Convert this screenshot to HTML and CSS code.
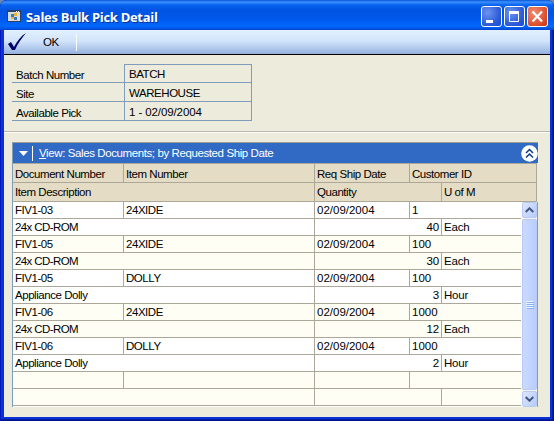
FILE: index.html
```html
<!DOCTYPE html>
<html lang="en">
<head>
<meta charset="utf-8">
<title>Sales Bulk Pick Detail</title>
<link rel="stylesheet" href="styles.css">
</head>
<body>
<main class="window">
  <header class="titlebar">
    <svg class="app-icon" width="14" height="12" viewBox="0 0 14 12" shape-rendering="crispEdges"><path fill="#294263" d="M0 0h14v12H0z"/><path fill="#d6dbe0" d="M1 2h12v9H1z"/><path fill="#f2f4f5" d="M9 1h1v1H9zM11 1h1v1h-1z"/><path fill="#3b78bc" d="M4 4h3v3H4zM7 7h3v3H7z"/><path fill="#e8b52c" d="M7 3h3v3H7zM4 7h3v2H4z"/></svg>
    <h1>Sales Bulk Pick Detail</h1>
    <div class="controls">
      <button class="control" aria-label="Minimize"><svg width="19" height="19"><path fill="#fff" d="M4 13h7v3H4z"/></svg></button>
      <button class="control" aria-label="Maximize"><svg width="19" height="19"><path fill="none" stroke="#fff" d="M4.500 5v9.500h9V5"/><path fill="#fff" d="M4 4h10v3H4z"/></svg></button>
      <button class="control close" aria-label="Close"><svg width="19" height="19"><path fill="none" stroke="#fff" stroke-width="2.200" d="M4.500 4.500l9.500 10M14 4.500l-9.500 10"/></svg></button>
    </div>
  </header>
  <div class="toolbar">
    <svg class="check" width="20" height="18" viewBox="0 0 20 18"><path fill="#00006b" d="M1 11l3-2 3 5C10 8 14 3 19 0c-4 5-8 10-11 17H5z"/></svg>
    <span class="ok">OK</span>
  </div>
  <section class="body">
    <div class="fields">
      <div class="label">Batch Number</div><div class="value batch">BATCH</div>
      <div class="label">Site</div><div class="value">WAREHOUSE</div>
      <div class="label">Available Pick</div><div class="value number">1 - 02/09/2004</div>
    </div>
    <div class="divider"></div>
    <section class="grid">
      <div class="viewbar">
        <svg width="9" height="5" viewBox="0 0 9 5"><path fill="#fff" d="M0 0h9L4.500 5z"/></svg>
        <span class="view"><u>V</u>iew: Sales Documents; by Requested Ship Date</span>
        <svg class="collapse" width="17" height="17" viewBox="0 0 17 17"><circle cx="8.500" cy="8.500" r="8.300" fill="#fff"/><path fill="none" stroke="#123b80" stroke-width="1.500" d="M5 8l3.500-3.500L12 8M5 12.500L8.500 9l3.500 3.500"/></svg>
      </div>
      <div class="heads">
        <div class="row top"><span>Document Number</span><span>Item Number</span><span>Req Ship Date</span><span>Customer ID</span></div>
        <div class="row detail"><span>Item Description</span><span>Quantity</span><span>U of M</span></div>
      </div>
      <div class="data">
        <div class="records">
          <div class="record"><div class="row top"><span>FIV1-03</span><span>24XIDE</span><span>02/09/2004</span><span>1</span></div><div class="row detail"><span class="tight">24x CD-ROM</span><span>40</span><span>Each</span></div></div>
          <div class="record"><div class="row top"><span>FIV1-05</span><span>24XIDE</span><span>02/09/2004</span><span>100</span></div><div class="row detail"><span class="tight">24x CD-ROM</span><span>30</span><span>Each</span></div></div>
          <div class="record"><div class="row top"><span>FIV1-05</span><span>DOLLY</span><span>02/09/2004</span><span>100</span></div><div class="row detail"><span>Appliance Dolly</span><span>3</span><span>Hour</span></div></div>
          <div class="record"><div class="row top"><span>FIV1-06</span><span>24XIDE</span><span>02/09/2004</span><span>1000</span></div><div class="row detail"><span class="tight">24x CD-ROM</span><span>12</span><span>Each</span></div></div>
          <div class="record"><div class="row top"><span>FIV1-06</span><span>DOLLY</span><span>02/09/2004</span><span>1000</span></div><div class="row detail"><span>Appliance Dolly</span><span>2</span><span>Hour</span></div></div>
          <div class="record"><div class="row top"><span></span><span></span><span></span><span></span></div><div class="row detail"><span></span><span></span><span></span></div></div>
        </div>
        <div class="scrollbar">
          <div class="arrow"><svg width="9" height="6"><path fill="none" stroke="#40567e" stroke-width="2" d="M.7 5l3.800-3.700L8.300 5"/></svg></div>
          <div class="thumb"><i></i><i></i><i></i><i></i></div>
          <div class="arrow"><svg width="9" height="6"><path fill="none" stroke="#40567e" stroke-width="2" d="M.7 1l3.800 3.700L8.300 1"/></svg></div>
        </div>
      </div>
    </section>
  </section>
</main>
</body>
</html>
```
FILE: styles.css
```css
* { box-sizing: border-box; }
body { margin: 0; background: #6c86ad; }
.window {
  width: 554px; height: 421px; padding: 0 4px 4px;
  display: flex; flex-direction: column;
  border-radius: 7px 7px 0 0; overflow: hidden;
  background: #0831d9;
  box-shadow: inset 1px 0 #0019b8, inset -1px -1px #00138c, inset -2px -2px #001ea0, inset 2px 0 #0834dc;
  color: #000; font: 11.5px/17px "Liberation Sans", Arial, sans-serif;
  letter-spacing: -.45px; white-space: nowrap;
}
.titlebar {
  flex: 0 0 30px; margin: 0 -4px; padding: 3px 6px 0 7px;
  display: flex; align-items: center;
  background: linear-gradient(#0754d5 0, #3c90ff 2px, #0864ef 5px, #0054e3 10px, #0057ea 18px, #0068ff 26px, #0052df 29px, #003dcc 30px);
}
.app-icon { margin-top: -1px; }
h1 { margin: 0 0 0 5px; color: #fff; font: bold 13px/20px "Open Sans", sans-serif; letter-spacing: -.3px; text-shadow: 1px 1px #083298; }
.controls { display: flex; gap: 2px; margin-left: auto; }
.control { width: 21px; height: 21px; padding: 0; border: 1px solid #fff; border-radius: 3px; background: radial-gradient(circle at 30% 30%, #6c94ee, #2b5ad9 65%, #174bd0); }
.control svg { display: block; }
.close { background: radial-gradient(circle at 30% 30%, #ed8e73, #de5030 65%, #bf3512); }
.toolbar { flex: 0 0 25px; display: flex; align-items: center; border-bottom: 1px solid #000; background: linear-gradient(#e2f0ff, #d3e5fb 45%, #a7c0e8 85%, #94afdd); }
.check { margin-left: 3px; }
.ok { width: 34px; height: 17px; margin-left: 16px; border-right: 1px solid #fff; }
.body { flex: 1; padding: 9px 0 0; background: #ecebdc; }
.fields { width: 240px; margin-left: 8px; display: grid; grid-template-columns: 112px 128px; grid-auto-rows: 19px; }
.label { padding: 3px 4px 0; border-bottom: 1px solid #7f9db9; }
.value { padding-left: 4px; border: solid #7f9db9; border-width: 0 1px 1px; line-height: 20px; }
.batch { border-top-width: 1px; line-height: 18px; }
.number { letter-spacing: -.1px; }
.divider { height: 2px; margin-top: 10px; border-top: 1px solid #b9b8ad; border-bottom: 1px solid #fff; }
.grid { width: 526px; margin: 9px 0 0 8px; border-left: 1px solid #7f9db9; }
.viewbar { height: 21px; display: flex; align-items: center; padding-left: 6px; border-top: 1px solid #9d9d91; background: #316ac5; color: #fff; }
.view { margin-left: 4px; padding-left: 6px; border-left: 1px solid #fff; line-height: 15px; letter-spacing: -.4px; }
.collapse { margin-left: auto; }
.heads { width: 524px; border: solid #aca899; border-width: 1px 1px 1px 0; background: #e4dcc5; }
.row { display: grid; height: 17px; border-bottom: 1px solid #aca899; }
.top { grid-template-columns: 110px 191px 95px 1fr; }
.detail { grid-template-columns: 301px 127px 1fr; }
.heads .row { height: 19px; grid-template-rows: 18px; line-height: 20px; }
.heads .detail { height: 18px; border: 0; line-height: 19px; }
.row span { padding-left: 2px; }
.row span + span { border-left: 1px solid #aca899; }
.data { display: flex; height: 205px; border-right: 1px solid #7f9db9; background: #fff; }
.records { width: 508px; }
.record:nth-child(even) { background: #fffef5; }
.record .row { grid-template-rows: 16px; line-height: 17px; }
.record .top span:nth-child(n+3) { letter-spacing: 0; }
.record .detail span:nth-child(2) { padding-right: 2px; text-align: right; letter-spacing: -.1px; }
.record .detail span:nth-child(3) { letter-spacing: -.2px; }
.record .detail .tight { letter-spacing: -.6px; }
.scrollbar { width: 15px; margin-left: auto; display: flex; flex-direction: column; gap: 1px; background: #f4f4ed; }
.arrow { height: 16px; display: flex; align-items: center; justify-content: center; border: 1px solid #b7caf5; border-radius: 2px; background: linear-gradient(120deg, #dce7ff, #b6cafa); }
.thumb { flex: 1; display: flex; flex-direction: column; align-items: center; justify-content: center; gap: 1px; border: 1px solid #b7caf5; border-radius: 2px; background: linear-gradient(90deg, #cbdafe, #bacdfd); }
.thumb i { width: 7px; height: 1px; background: #eef4fe; box-shadow: 1px 1px #8cb0f8; }
```
